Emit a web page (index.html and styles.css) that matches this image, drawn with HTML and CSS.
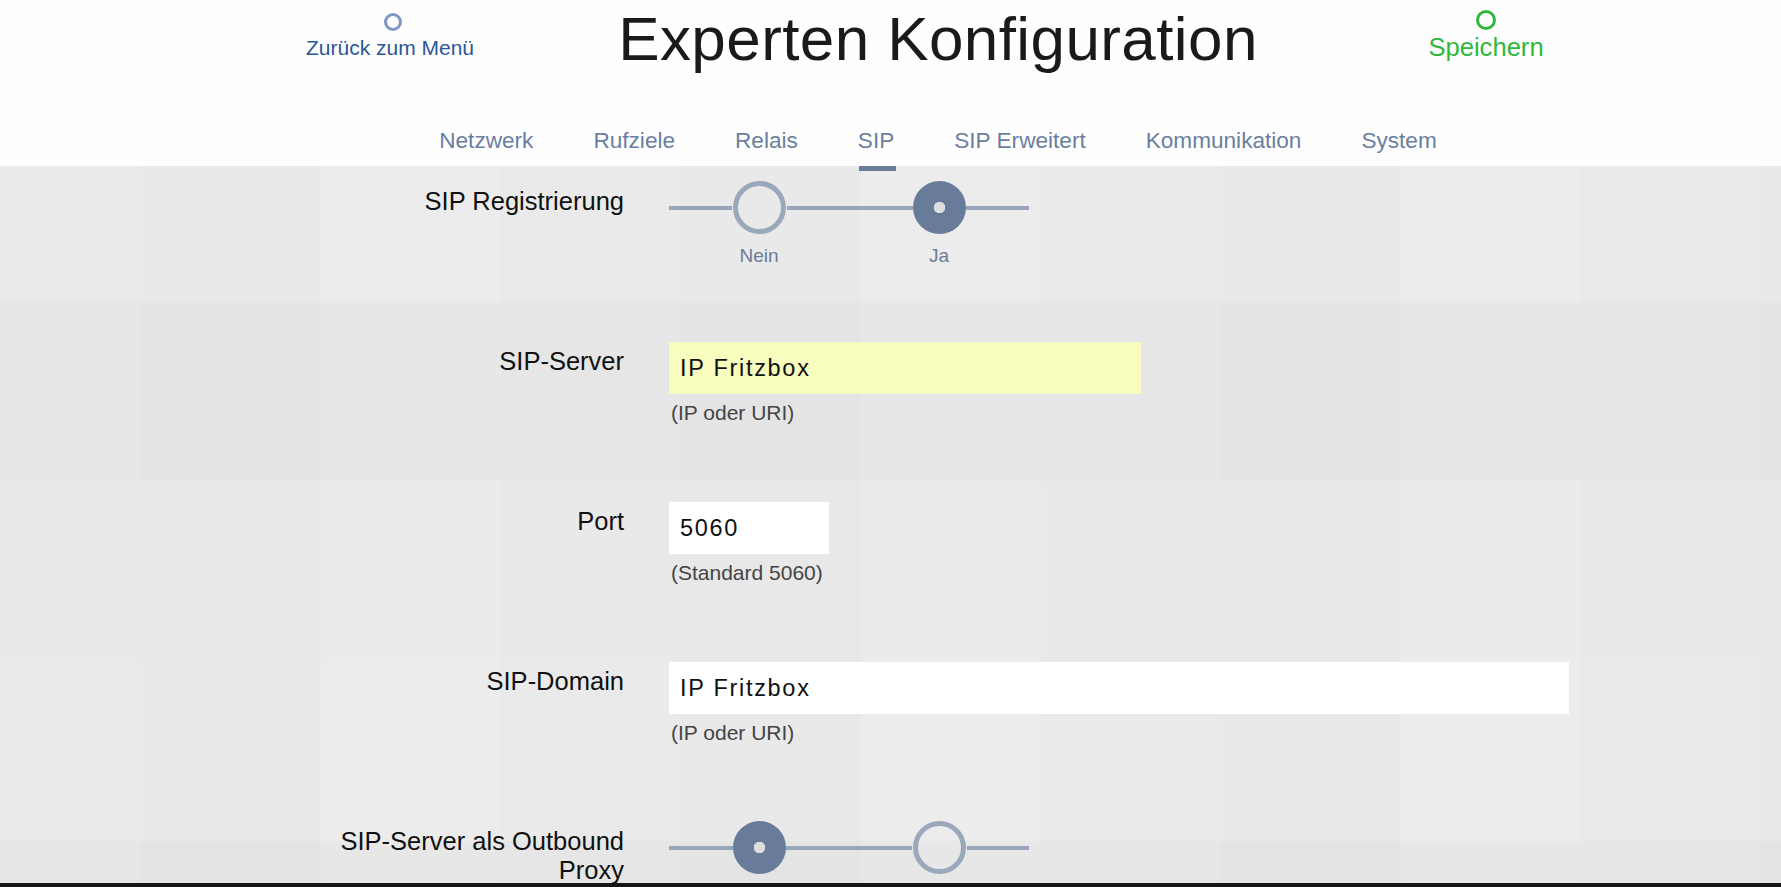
FILE: index.html
```html
<!DOCTYPE html>
<html lang="de">
<head>
<meta charset="utf-8">
<title>Experten Konfiguration</title>
<link rel="stylesheet" href="styles.css">
</head>
<body>
<header class="top">
  <div class="head-row">
    <a class="head-link back" href="#"><span class="ring"></span><span class="head-text">Zurück zum Menü</span></a>
    <h1 class="title">Experten Konfiguration</h1>
    <a class="head-link save" href="#"><span class="ring"></span><span class="head-text">Speichern</span></a>
  </div>
  <nav class="tabs">
    <a class="tab" href="#">Netzwerk</a>
    <a class="tab" href="#">Rufziele</a>
    <a class="tab" href="#">Relais</a>
    <a class="tab active" href="#">SIP</a>
    <a class="tab" href="#">SIP Erweitert</a>
    <a class="tab" href="#">Kommunikation</a>
    <a class="tab" href="#">System</a>
  </nav>
</header>

<main class="form">
  <div class="row">
    <div class="label">SIP Registrierung</div>
    <div class="field">
      <div class="switch">
        <div class="opt"><div class="knob-row"><span class="knob"></span></div><span class="opt-label">Nein</span></div>
        <div class="opt"><div class="knob-row"><span class="knob on"></span></div><span class="opt-label">Ja</span></div>
      </div>
    </div>
  </div>

  <div class="row">
    <div class="label">SIP-Server</div>
    <div class="field">
      <input class="input input-mid autofill" type="text" value="IP Fritzbox">
      <div class="hint">(IP oder URI)</div>
    </div>
  </div>

  <div class="row">
    <div class="label">Port</div>
    <div class="field">
      <input class="input input-small" type="text" value="5060">
      <div class="hint">(Standard 5060)</div>
    </div>
  </div>

  <div class="row">
    <div class="label">SIP-Domain</div>
    <div class="field">
      <input class="input input-wide" type="text" value="IP Fritzbox">
      <div class="hint">(IP oder URI)</div>
    </div>
  </div>

  <div class="row">
    <div class="label">SIP-Server als Outbound Proxy</div>
    <div class="field">
      <div class="switch">
        <div class="opt"><div class="knob-row"><span class="knob on"></span></div><span class="opt-label">Ja</span></div>
        <div class="opt"><div class="knob-row"><span class="knob"></span></div><span class="opt-label">Nein</span></div>
      </div>
    </div>
  </div>
</main>
<div class="bottom-bar"></div>
</body>
</html>
```

FILE: styles.css
```css
html, body {
  margin: 0;
  padding: 0;
}

body {
  font-family: "Liberation Sans", Arial, sans-serif;
  color: #111;
  height: 887px;
  overflow: hidden;
  background-color: #e7e7e7;
  background-image:
    linear-gradient(90deg, rgba(255,255,255,0) 0 180px, rgba(255,255,255,0.13) 180px 360px, rgba(255,255,255,0.06) 360px 540px),
    linear-gradient(180deg, rgba(255,255,255,0.08) 0 180px, rgba(0,0,0,0.012) 180px 360px, rgba(255,255,255,0.04) 360px 540px);
  background-size: 540px 100%, 100% 540px;
  background-position: 141px 0, 0 121px;
}

/* ---------- header ---------- */
.top {
  position: relative;
  z-index: 1;
  height: 166px;
  background: rgba(255,255,255,0.92);
}

.head-row {
  margin-left: 116px;
  width: 1644px;
  height: 128px;
  display: grid;
  grid-template-columns: 548px 548px 548px;
  align-items: start;
  justify-items: center;
}

.head-link {
  display: flex;
  flex-direction: column;
  align-items: center;
  text-decoration: none;
}

.ring {
  display: block;
  box-sizing: border-box;
  border-radius: 50%;
}

.back {
  color: #2b5797;
  padding-top: 13px;
}
.back .ring {
  width: 18px;
  height: 18px;
  border: 3px solid #7f97c2;
  margin-bottom: 5px;
  margin-left: 6px;
}
.back .head-text {
  font-size: 21px;
}

.save {
  color: #2eb83c;
  padding-top: 10px;
}
.save .ring {
  width: 20px;
  height: 20px;
  border: 3px solid #2eb83c;
  margin-bottom: 3px;
}
.save .head-text {
  font-size: 25.6px;
}

.title {
  margin: 0;
  padding-top: 3px;
  font-weight: normal;
  font-size: 62px;
  letter-spacing: 0.4px;
  color: #1a1a1a;
  white-space: nowrap;
}

.tabs {
  margin-left: 116px;
  width: 1644px;
  display: flex;
  justify-content: center;
  gap: 60px;
}

.tab {
  position: relative;
  font-size: 22.6px;
  line-height: 26px;
  padding-bottom: 12px;
  color: #6a7fa0;
  text-decoration: none;
}

.tab.active::after {
  content: "";
  position: absolute;
  left: 1px;
  right: -2px;
  bottom: -5px;
  height: 5px;
  background: #687c9a;
}

/* ---------- form ---------- */
.form {
  margin-left: 324px;
  padding-top: 16px;
}

.row {
  display: grid;
  grid-template-columns: 300px 900px;
  column-gap: 45px;
  height: 160px;
}

.label {
  padding-top: 5px;
  text-align: right;
  font-size: 25.5px;
  color: #111;
}

.field {
  display: flex;
  flex-direction: column;
  align-items: flex-start;
}

.input {
  box-sizing: border-box;
  height: 52px;
  border: none;
  margin: 0;
  padding: 0 11px;
  font-family: "Liberation Sans", Arial, sans-serif;
  font-size: 23.5px;
  letter-spacing: 1.7px;
  color: #111;
  background: #fff;
  outline: none;
}
.input-mid { width: 472px; }
.input-small { width: 160px; }
.input-wide { width: 900px; }
.autofill { background: #f8fcbd; }

.hint {
  margin-top: 7px;
  margin-left: 2px;
  font-size: 21px;
  color: #444;
}

/* ---------- switch ---------- */
.switch {
  margin-top: -1px;
  width: 360px;
  display: grid;
  grid-template-columns: 180px 180px;
}

.opt {
  display: flex;
  flex-direction: column;
  align-items: center;
}

.knob-row {
  width: 100%;
  display: flex;
  align-items: center;
}
.knob-row::before,
.knob-row::after {
  content: "";
  flex: 1;
  height: 4px;
  background: #97a6ba;
}

.knob {
  width: 53px;
  height: 53px;
  box-sizing: border-box;
  border-radius: 50%;
  border: 5px solid #9aa8bb;
  margin: 0 1px;
}
.knob.on {
  border: none;
  background: radial-gradient(circle, #dedede 0 5.5px, #687c9a 6px);
  margin: 0;
}

.opt-label {
  margin-top: 11px;
  font-size: 19px;
  color: #687c9a;
}

.bottom-bar {
  position: fixed;
  left: 0;
  right: 0;
  bottom: 0;
  height: 4px;
  background: #151515;
  z-index: 2;
}
```
